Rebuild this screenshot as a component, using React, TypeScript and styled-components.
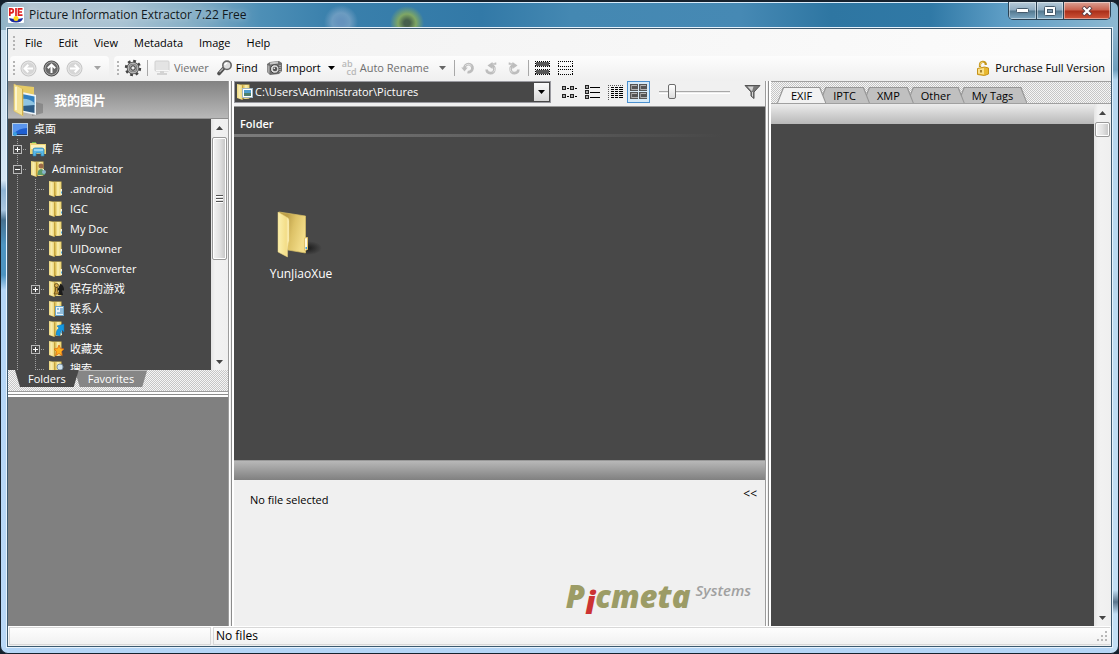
import React from "react";
import styled, { createGlobalStyle, css } from "styled-components";

const INK = "#484848";

const GlobalStyle = createGlobalStyle`
  * { box-sizing: border-box; }
  html, body { margin: 0; background: #14202c; }
  body, button, input {
    font-family: "Open Sans", "Noto Sans", "Noto Sans CJK SC", sans-serif;
    font-size: 11px;
    line-height: 16px;
    color: #000;
  }
  button { background: none; border: 0; padding: 0; margin: 0; }
  svg { display: block; flex: none; }
`;

/* ---------- window frame ---------- */

const Frame = styled.div`
  display: flex;
  flex-direction: column;
  height: 100vh;
  min-height: 480px;
  padding: 0 7px 7px;
  border: 1px solid #17222e;
  border-top-width: 2px;
  border-radius: 8px;
  overflow: hidden;
  background:
    linear-gradient(#d9ecfb, #d9ecfb) 0 0 / 100% 1px no-repeat,
    radial-gradient(circle at 406px 21px, #46604c 0 3px, #7fa765 9px, #7fa76500 17px) 0 0 / 100% 28px no-repeat,
    radial-gradient(circle at 340px 20px, #6593bd 0 3px, #86aacbaa 9px, #86aacb00 17px) 0 0 / 100% 28px no-repeat,
    radial-gradient(ellipse at 210px 26px, #c9a08c88 0, #c9a08c00 20px) 0 0 / 100% 28px no-repeat,
    linear-gradient(90deg, #8fb3c6 0, #b3c4d0 30px, #a9c3d3 120px, #86afc6 190px, #4d8fb6 260px, #3a80ac 330px, #3279a7 480px, #4488b2 570px, #4689b4 740px, #2e76a2 830px, #3079a6 930px, #5c9cc4 1000px, #8db9d2 100%) 0 0 / 100% 28px no-repeat,
    linear-gradient(#c6dcec 0, #d6e7f5 150px, #8fb4d4 160px, #a9c6e0 180px, #46708f 190px, #4d94c1 215px, #4d94c1 245px, #b5d6f6 260px, #b9d8f7 100%) 0 28px / 8px 100% no-repeat,
    linear-gradient(#8db5cf 0, #6f9fbe 40px, #b5d6ee 50px, #c3dff5 560px, #5a748c 572px, #c3dff5 584px, #c3dff5 100%) 100% 28px / 8px 100% no-repeat,
    #b4d5f6;
`;

const TitleBar = styled.header`
  display: flex;
  align-items: flex-start;
  height: 27px;
  flex: none;
`;

const Title = styled.h1`
  display: flex;
  align-items: center;
  gap: 5px;
  height: 26px;
  margin: 0;
  font-size: 12px;
  font-weight: 400;
  line-height: 16px;
  flex: 1;
  color: #101820;
  text-shadow: 0 0 6px #fff9;
`;

const Caption = styled.div`
  display: flex;
  height: 18px;
  border: 1px solid #2b4254;
  border-top: 0;
  border-radius: 0 0 5px 5px;
  overflow: hidden;
`;

const CaptionButton = styled.button<{ $close?: boolean }>`
  display: grid;
  place-items: center;
  width: ${(p) => (p.$close ? 47 : 27)}px;
  height: 17px;
  box-shadow: inset 0 0 0 1px #ffffff70;
  background: ${(p) =>
    p.$close
      ? "linear-gradient(#dba295, #c9604c 48%, #a92e18 52%, #d0553a)"
      : "linear-gradient(#b7cbd9, #8fabc0 48%, #54788f 52%, #7fa9c4)"};
  & + & { border-left: 1px solid #2b4254; }
`;

const Client = styled.main`
  display: flex;
  flex-direction: column;
  flex: 1;
  min-height: 0;
  background: #f0f0f0;
  box-shadow: 0 0 0 1px #3c5a70, 0 0 0 2px #e6f2fc;
`;

/* ---------- menu and toolbar ---------- */

const MenuBar = styled.nav`
  display: flex;
  align-items: center;
  height: 27px;
  flex: none;
  padding-left: 4px;
  background: linear-gradient(90deg, #f0f0f0, #fcfcfc);
`;

const MenuItem = styled.button`
  height: 20px;
  padding: 0 8px;
`;

const Grip = styled.span`
  width: 2px;
  height: 14px;
  margin: 0 2px 0 1px;
  flex: none;
  background: linear-gradient(#b4b4b4 2px, transparent 2px) 0 0 / 2px 4px;
`;

const ToolRow = styled.div`
  display: flex;
  height: 25px;
  flex: none;
  padding-left: 2px;
  background: linear-gradient(90deg, #f0f0f0, #fafafa);
`;

const ToolGroup = styled.div<{ $grow?: boolean }>`
  display: flex;
  align-items: center;
  padding: 0 0 1px 2px;
  margin-right: 5px;
  border-radius: 4px 4px 0 0;
  background: linear-gradient(#fdfdfd, #efefef);
  ${(p) => p.$grow && css`flex: 1; margin-right: 0;`}
`;

const ToolButton = styled.button<{ $w?: number }>`
  display: flex;
  align-items: center;
  justify-content: ${(p) => (p.$w ? "center" : "flex-start")};
  gap: 3px;
  height: 22px;
  ${(p) => (p.$w ? `width: ${p.$w}px;` : "padding: 0 4px;")}
  white-space: nowrap;
  &:disabled { color: #6f6f6f; }
`;

const Separator = styled.span`
  width: 1px;
  height: 16px;
  margin: 0 2px;
  background: #a8a8a8;
`;

const Purchase = styled.a`
  display: flex;
  align-items: center;
  gap: 6px;
  margin-left: auto;
  padding-right: 6px;
  color: #000;
  text-decoration: none;
`;

/* ---------- panes ---------- */

const Workspace = styled.div`
  display: flex;
  flex: 1;
  min-height: 0;
`;

const Pane = styled.section<{ $width?: number }>`
  display: flex;
  flex-direction: column;
  min-width: 0;
  ${(p) => (p.$width ? `flex: none; width: ${p.$width}px;` : "flex: 1;")}
`;

const VSplit = styled.div`
  width: 6px;
  flex: none;
  background: linear-gradient(90deg, #9c9c9c 1px, #fff 1px 2px, #f0f0f0 2px 3px, #8c8c8c 3px 4px, #fff 4px);
`;

const HSplit = styled.div`
  height: 6px;
  flex: none;
  background: linear-gradient(#9c9c9c 1px, #fff 1px 3px, #8c8c8c 3px 4px, #fff 4px);
`;

const Hatch = css`
  background: repeating-conic-gradient(#c6c6c6 0 25%, #f6f6f6 0 50%) 0 0 / 2px 2px;
`;

const PaneHeader = styled.h2`
  display: flex;
  align-items: center;
  gap: 9px;
  height: 38px;
  flex: none;
  margin: 0;
  padding-left: 5px;
  font-size: 13px;
  line-height: 18px;
  font-weight: 700;
  color: #fff;
  background: linear-gradient(#828282, #b8b8b8);
  border-bottom: 1px solid #8e8e8e;
`;

const ScrollArea = styled.div`
  display: flex;
  flex: 1;
  min-height: 0;
  background: ${INK};
`;

const Tree = styled.ul`
  flex: 1;
  margin: 0;
  padding: 0;
  list-style: none;
  overflow: hidden;
`;

const TreeRow = styled.li`
  display: flex;
  align-items: center;
  height: 20px;
  color: #fff;
  white-space: nowrap;
`;

const TreeLabel = styled.button`
  display: flex;
  align-items: center;
  gap: 4px;
  height: 20px;
  padding-left: 4px;
  color: #fff;
`;

const vertical = "linear-gradient(#a0a0a0 1px, transparent 1px) 9px 0 / 1px 2px repeat-y";
const horizontal = "linear-gradient(90deg, #a0a0a0 1px, transparent 1px) 9px 10px / 2px 1px repeat-x";

const Guide = styled.span<{ $branch?: boolean }>`
  display: grid;
  place-items: center;
  width: 18px;
  height: 20px;
  flex: none;
  background: ${vertical};
  ${(p) =>
    p.$branch &&
    css`
      background: linear-gradient(${INK}, ${INK}) 0 10px / 9px 1px no-repeat, ${vertical}, ${horizontal};
    `}
`;

const Expander = styled.button<{ $open?: boolean }>`
  width: 9px;
  height: 9px;
  border: 1px solid #b8b8b8;
  background: ${(p) => (p.$open ? "" : "linear-gradient(#fff, #fff) 3px 1px / 1px 5px no-repeat,")}
    linear-gradient(#fff, #fff) 1px 3px / 5px 1px no-repeat, ${INK};
`;

const ScrollBar = styled.div`
  display: flex;
  flex-direction: column;
  width: 17px;
  flex: none;
  background: linear-gradient(90deg, #e4e4e4, #f2f2f2 4px, #efefef);
`;

const ScrollArrow = styled.button`
  display: grid;
  place-items: center;
  width: 17px;
  height: 17px;
`;

const ScrollTrack = styled.div`
  flex: 1;
  min-height: 0;
  padding: 1px 1px 0;
`;

const Thumb = styled.div<{ $size: string }>`
  display: grid;
  place-items: center;
  height: ${(p) => p.$size};
  border: 1px solid #999;
  border-radius: 2px;
  box-shadow: inset 0 0 0 1px #fff;
  background: linear-gradient(90deg, #f4f4f4, #e2e2e2 50%, #c4c4c4);
`;

const TabsBelow = styled.div`
  display: flex;
  align-items: flex-start;
  height: 21px;
  flex: none;
  padding-left: 7px;
  ${Hatch}
`;

const FolderTab = styled.button<{ $active?: boolean }>`
  height: 17px;
  padding: 0 13px;
  margin-right: -4px;
  color: #fff;
  background: ${(p) => (p.$active ? INK : "linear-gradient(#b8b8b8 1px, #868686 1px)")};
  clip-path: polygon(0 0, 100% 0, calc(100% - 5px) 100%, 5px 100%);
  position: relative;
  z-index: ${(p) => (p.$active ? 1 : 0)};
`;

const TabsAbove = styled.div`
  display: flex;
  align-items: flex-end;
  height: 23px;
  flex: none;
  padding-left: 6px;
  border-top: 1px solid #a0a0a0;
  border-bottom: 1px solid #a0a0a0;
  ${Hatch}
`;

const slant = "polygon(0 100%, 6px 0, calc(100% - 6px) 0, 100% 100%)";

const MetaTab = styled.button<{ $order: number; $active?: boolean }>`
  position: relative;
  z-index: ${(p) => 9 - p.$order};
  height: 16px;
  padding: 1px 14px 0;
  margin-right: -7px;
  background: #969696;
  clip-path: ${slant};
  isolation: isolate;
  &::before {
    content: "";
    position: absolute;
    z-index: -1;
    inset: 1px 1px 0;
    background: ${(p) => (p.$active ? "#f2f2f2" : "#c0c0c0")};
    clip-path: ${slant};
  }
`;

const PreviewPane = styled.div`
  height: 229px;
  flex: none;
  background: #808080;
`;

/* ---------- centre pane ---------- */

const PathRow = styled.div`
  display: flex;
  align-items: center;
  height: 26px;
  flex: none;
  padding: 0 4px 4px 0;
  border-bottom: 1px solid #999;
`;

const ComboBox = styled.div`
  display: flex;
  align-items: center;
  width: 317px;
  height: 22px;
  margin-right: 7px;
  flex: none;
  border: 1px solid #9a9aa0;
  padding: 1px;
  background: ${INK};
`;

const PathInput = styled.input`
  flex: 1;
  min-width: 0;
  height: 18px;
  margin-left: 1px;
  padding: 0;
  border: 0;
  outline: 0;
  color: #fff;
  background: transparent;
`;

const DropButton = styled.button`
  display: grid;
  place-items: center;
  width: 15px;
  height: 18px;
  background: linear-gradient(#fafafa, #d8d8d8);
`;

const ViewButton = styled.button<{ $active?: boolean }>`
  display: grid;
  place-items: center;
  width: 23px;
  height: 22px;
  ${(p) => p.$active && css`border: 1px solid #4a90d0; background: #d6eaf8;`}
`;

const Slider = styled.input`
  appearance: none;
  width: 71px;
  height: 16px;
  margin: 0 0 0 9px;
  background: linear-gradient(#a8a8a8 1px, #ececec 1px 2px, #fff 2px) 0 7px / 100% 3px no-repeat;
  &::-webkit-slider-thumb {
    appearance: none;
    width: 8px;
    height: 15px;
    border: 1px solid #6c6c6c;
    border-radius: 2px;
    background: linear-gradient(#fff, #dcdcdc);
  }
`;

const FilterButton = styled.button`
  margin-left: auto;
`;

const FileArea = styled.div`
  flex: 1;
  min-height: 0;
  background: ${INK};
`;

const GroupHeading = styled.h3`
  height: 30px;
  margin: 0;
  padding: 9px 6px 0;
  font-size: 11px;
  line-height: 16px;
  font-weight: 600;
  color: #fff;
  background: linear-gradient(90deg, #7c7c7c, ${INK} 92%) 0 100% / 100% 3px no-repeat;
`;

const FileGrid = styled.div`
  display: flex;
  flex-wrap: wrap;
  padding: 73px 16px 0;
`;

const FileItem = styled.button`
  display: flex;
  flex-direction: column;
  align-items: center;
  gap: 6px;
  width: 102px;
  font-size: 12px;
  color: #fff;
`;

const Bar = styled.div<{ $dark?: boolean }>`
  height: 20px;
  flex: none;
  ${(p) =>
    p.$dark
      ? "background: linear-gradient(#b8b8b8, #808080); border-top: 1px solid #999;"
      : "background: linear-gradient(#ececec, #b8b8b8);"}
`;

const InfoPane = styled.div`
  display: flex;
  flex-direction: column;
  justify-content: space-between;
  height: 146px;
  flex: none;
  padding: 6px 8px 10px 16px;
  background: #f0f0f0;
`;

const InfoTop = styled.div`
  display: flex;
  justify-content: space-between;
  align-items: flex-start;
`;

const InfoText = styled.p`
  margin: 6px 0 0;
`;

const Collapse = styled.button`
  font-size: 12px;
`;

const Logo = styled.div`
  display: flex;
  align-items: flex-start;
  align-self: flex-end;
  gap: 5px;
  padding-right: 6px;
  font-style: italic;
`;

const LogoWord = styled.strong`
  font-size: 31px;
  line-height: 40px;
  font-weight: 800;
  color: #9c9c66;
`;

const LogoDrop = styled.span`
  display: inline-block;
  color: #cc3333;
  position: relative;
  top: 6px;
`;

const LogoSub = styled.em`
  font-size: 15px;
  line-height: 20px;
  font-weight: 600;
  padding-top: 4px;
  color: #a0a0a0;
`;

const StatusBar = styled.footer`
  display: flex;
  gap: 2px;
  height: 20px;
  flex: none;
  padding: 1px;
  font-size: 12px;
  background: linear-gradient(#fff, #f0f0f0);
`;

const StatusCell = styled.div<{ $width?: number }>`
  display: flex;
  align-items: center;
  justify-content: space-between;
  padding: 0 2px;
  border: 1px solid #d8d8d8;
  ${(p) => (p.$width ? `width: ${p.$width}px;` : "flex: 1; border-right: 0;")}
`;

/* ---------- icons ---------- */

const PieIcon = () => (
  <svg width="16" height="16" viewBox="0 0 16 16">
    <rect width="16" height="16" rx="1" fill="#fff" />
    <path d="M1 11q7 2 14 0q-1 4.500-7 4.500t-7-4.500" fill="#1a2b9c" />
    <circle cx="8" cy="11.500" r="2.500" fill="#ffd91a" />
    <path d="M1.800 9V1.800h1.500q2 0 2 2t-2 2H1.800M8 1v8M14.500 1.800h-4v6.400h4M10.500 5h3.500" fill="none" stroke="#e01f1f" strokeWidth="1.700" />
  </svg>
);

const Arrow = ({ dir, off }: { dir: "left" | "up" | "right"; off?: boolean }) => (
  <svg width="17" height="17" viewBox="0 0 17 17">
    <circle cx="8.500" cy="8.500" r="7.500" fill={off ? "#d6d6d6" : "#686868"} stroke={off ? "#c2c2c2" : "#444"} />
    <circle cx="8.500" cy="8.500" r="6.500" fill="none" stroke={off ? "#e6e6e6" : "#a4a4a4"} />
    <path
      d="M8.500 13V5M4.800 8.300L8.500 4.600l3.700 3.700"
      fill="none"
      stroke="#fff"
      strokeWidth="2"
      transform={`rotate(${dir === "left" ? -90 : dir === "right" ? 90 : 0} 8.500 8.500)`}
    />
  </svg>
);

const Caret = ({ color = "#000", up }: { color?: string; up?: boolean }) => (
  <svg width="7" height="4" viewBox="0 0 7 4">
    <path d={up ? "M0 4h7L3.500 0z" : "M0 0h7L3.500 4z"} fill={color} />
  </svg>
);

const GearIcon = () => (
  <svg width="18" height="18" viewBox="0 0 18 18">
    <circle cx="9" cy="9" r="7" fill="none" stroke="#444" strokeWidth="2.400" strokeDasharray="2.750 2.750" />
    <circle cx="9" cy="9" r="5" fill="#a8a8a8" stroke="#4c4c4c" strokeWidth="2.600" />
    <circle cx="9" cy="9" r="4.800" fill="none" stroke="#b4b4b4" strokeWidth="1.400" />
    <circle cx="9" cy="9" r="2.200" fill="#eee" stroke="#333" />
  </svg>
);

const ViewerIcon = () => (
  <svg width="17" height="16" viewBox="0 0 17 16">
    <rect x="1" y="1" width="14" height="10" rx="1" fill="#e4e4e4" stroke="#d0d0d0" />
    <path d="M6 11h4v2h3v2H3v-2h3z" fill="#d4d4d4" />
    <path d="M2 10.500h13" stroke="#f8f8f8" />
  </svg>
);

const FindIcon = () => (
  <svg width="16" height="16" viewBox="0 0 16 16">
    <path d="M6.500 8.500L2 13.500" stroke="#505050" strokeWidth="3.600" strokeLinecap="round" />
    <path d="M6 8.500L2.500 12.200" stroke="#b8b8b8" strokeWidth="1.200" />
    <circle cx="10" cy="5.300" r="4.200" fill="#dedede" stroke="#666" strokeWidth="1.600" />
    <path d="M7.700 5q.6-2 2.500-2" fill="none" stroke="#fff" strokeWidth="1.400" />
  </svg>
);

const CameraIcon = () => (
  <svg width="17" height="16" viewBox="0 0 17 16">
    <path d="M1 4l3-2 9-1 3 2v8l-3 3-9 1-3-3z" fill="#707070" />
    <path d="M4 2.500l8-1v2l-8 1z" fill="#c9c9c9" />
    <path d="M1.500 5v7l2 1.500V6z" fill="#aaa" />
    <circle cx="8.800" cy="9" r="4.300" fill="#ddd" stroke="#444" />
    <circle cx="9" cy="9" r="2.300" fill="#555" />
    <circle cx="8.300" cy="8.300" r=".8" fill="#fff" />
    <path d="M14 5v7" stroke="#e0e0e0" strokeDasharray="1 1" />
  </svg>
);

const AbcdMark = styled.span`
  display: flex;
  flex-direction: column;
  width: 15px;
  font-size: 9px;
  line-height: 8px;
  font-weight: 600;
  color: #b8b8b8;
  span { align-self: flex-start; }
  span + span { align-self: flex-end; }
`;

const RotateIcon = ({ kind }: { kind: "both" | "left" | "right" }) => (
  <svg width="14" height="14" viewBox="0 0 14 14">
    <g transform={kind === "right" ? "translate(14 0) scale(-1 1)" : undefined}>
      {kind === "both" ? (
        <>
          <path d="M3.500 7.500A4 4 0 1 1 6.500 11" fill="none" stroke="#bdbdbd" strokeWidth="2.800" />
          <path d="M4 5A4 4 0 0 1 10.500 5" fill="none" stroke="#e0e0e0" strokeWidth="1" />
          <path d="M.3 6.500h6.400l-3.200 4z" fill="#bdbdbd" />
        </>
      ) : (
        <>
          <path d="M7 4.500h.5a3.900 3.900 0 1 1-4.900 4" fill="none" stroke="#bdbdbd" strokeWidth="2.600" />
          <path d="M8.500 1v7L3.500 4.500z" fill="#bdbdbd" />
          <path d="M7 3h4.500V1.500" fill="none" stroke="#bdbdbd" strokeWidth="1.600" />
          <path d="M10.500 6.500q1.500 2.500-1.500 5" fill="none" stroke="#dedede" strokeWidth="1" />
        </>
      )}
    </g>
  </svg>
);

const SelectIcon = ({ filled }: { filled?: boolean }) => (
  <svg width="15" height="14" viewBox="0 0 15 14" shapeRendering="crispEdges">
    {[0, 8].map((y) => (
      <g key={y} transform={`translate(0 ${y})`}>
        {filled && <rect x="1" y="1" width="13" height="4" fill="#585858" />}
        <path d="M0 .5h15M0 5.500h15M.5 0v6M14.500 0v6" stroke="#000" strokeDasharray="1 1" />
      </g>
    ))}
  </svg>
);

const LockIcon = () => (
  <svg width="12" height="16" viewBox="0 0 12 16">
    <path d="M3 7V4.500A3 3 0 0 1 8.700 3.500V5" fill="none" stroke="#c4961c" strokeWidth="2.200" />
    <path d="M3.300 6V4.500a2.500 2.500 0 0 1 3-2.300" fill="none" stroke="#f4d878" />
    <path d="M.5 8.500l7-1.500 4 1v6l-4 1.500-7-1z" fill="#e8b830" stroke="#c4921a" />
    <path d="M1 9l6-1v6.500l-6-1z" fill="#fae08a" />
    <path d="M4 10v2.500" stroke="#8a6410" strokeWidth="1.500" />
  </svg>
);

const ListIcon = ({ kind }: { kind: "small" | "list" | "detail" | "thumbs" }) => (
  <svg width="17" height="16" viewBox="0 0 17 16" shapeRendering="crispEdges">
    {kind === "small" &&
      [2, 10].map((y) =>
        [1, 9].map((x) => (
          <g key={`${x}-${y}`}>
            <rect x={x + 0.5} y={y + 0.5} width="3" height="3" fill="#aaa" stroke="#222" />
            <path d={`M${x + 5} ${y + 2.5}h2`} stroke="#000" />
          </g>
        ))
      )}
    {kind === "list" &&
      [1, 6, 11].map((y) => (
        <g key={y}>
          <rect x="1.500" y={y + 0.5} width="3" height="3" fill="#aaa" stroke="#222" />
          <path d={`M6 ${y + 2.5}h10`} stroke="#000" />
        </g>
      ))}
    {kind === "detail" && (
      <>
        <path d="M1 1.500h15M1.500 3v13" stroke="#555" strokeDasharray="1 1" />
        {[4, 6, 8, 10, 12, 14].map((y) => (
          <path key={y} d={`M4 ${y - 0.5}h3M8 ${y - 0.5}h3M12 ${y - 0.5}h4`} stroke="#000" />
        ))}
      </>
    )}
    {kind === "thumbs" &&
      [0, 8].map((y) =>
        [0, 9].map((x) => (
          <g key={`${x}-${y}`}>
            <rect x={x + 0.5} y={y + 0.5} width="7" height="6" fill="#555" stroke="#555" />
            <path d={`M${x + 2} ${y + 1.5}h5M${x + 1} ${y + 5.5}h7`} stroke="#b4b4b4" />
            <path d={`M${x + 1.5} ${y + 1}v5`} stroke="#999" />
          </g>
        ))
      )}
  </svg>
);

const FunnelIcon = () => (
  <svg width="17" height="16" viewBox="0 0 17 16">
    <path d="M1 1.500h15l-6 6.500v6.500L7 12V8z" fill="#777" stroke="#555" />
    <path d="M3.500 2.500h6L8 7.500z" fill="#d4d4d4" />
    <path d="M8.500 8v4.500" stroke="#d8d8d8" />
  </svg>
);

type Badge = "none" | "user" | "game" | "contact" | "link" | "star" | "search" | "picture";

const FolderIcon = ({ badge = "none" }: { badge?: Badge }) => (
  <svg width="18" height="18" viewBox="0 0 18 18">
    <path d="M1 1.500h12.500v14H6z" fill="#dcbf58" />
    <path d="M7 2h6v13.500l-5 .5z" fill="#ecd67a" />
    <path d="M9 2h2.500v13.500H9z" fill="#f6e9a6" />
    <path d="M1 1l5.500 1.500V17L1 15z" fill="#f0dc88" />
    <path d="M2.500 2l2 .6v13l-2-.8z" fill="#f8ebae" />
    <path d="M6 2.500V17l1.300-1V2z" fill="#c4a23c" />
    <path d="M12.500 9h1.500v6h-1.500z" fill="#f7f2dc" />
    <path d="M13 11.500h1v2h-1z" fill="#4fa9d8" />
    {badge === "user" && (
      <>
        <circle cx="11" cy="6" r="2.500" fill="#9b6a48" />
        <path d="M7.500 15q0-6 3.500-6t4 6z" fill="#5b9a6c" />
        <circle cx="14" cy="12" r="2" fill="#87b4c8" />
      </>
    )}
    {badge === "game" && (
      <>
        <path d="M12.500 3.500q4 3 3.500 7h-2l1 4.500h-5l1-4.500H9z" fill="#1b1b1b" />
        <circle cx="8.500" cy="5.500" r="2" fill="#d8ac4a" stroke="#5c4416" strokeWidth=".8" />
        <path d="M7.500 7.500h2v3.500l1.500 3H6l1.500-3z" fill="#c79a3c" stroke="#5c4416" strokeWidth=".8" />
      </>
    )}
    {badge === "contact" && (
      <>
        <rect x="7.500" y="6.500" width="8" height="9" fill="#e9f4fb" stroke="#6aa4c8" />
        <path d="M9 9h2M12 9h3M12 11h3M9 13h6" stroke="#3a86bd" />
      </>
    )}
    {badge === "link" && <path d="M8 15q0-5 3-7L9 6l7-2v8l-2-2q-2 2-2 6z" fill="#1597e0" stroke="#0b6cb0" strokeWidth=".5" />}
    {badge === "star" && (
      <path d="M11 5l1.500 3.500 3.500.5-2.500 2.500.7 4-3.200-2-3.200 2 .7-4L6 9l3.500-.5z" fill="#ffb21e" stroke="#dd6a10" strokeWidth=".8" />
    )}
    {badge === "search" && <circle cx="12" cy="7" r="3" fill="#cfe2ee" stroke="#7d94a4" />}
    {badge === "picture" && (
      <>
        <rect x="6.500" y="5.500" width="10" height="9" fill="#fff" stroke="#9fb6c4" />
        <path d="M8 7h7v3H8z" fill="#4e9ccb" />
        <path d="M8 10h7v3H8z" fill="#4d7f6c" />
      </>
    )}
  </svg>
);

const DesktopIcon = () => (
  <svg width="18" height="18" viewBox="0 0 18 18">
    <rect x=".5" y="3.500" width="15" height="12" fill="#1f5fd0" stroke="#b4cbe0" />
    <path d="M1 4h14v4Q7 8 1 14z" fill="#5b96ee" />
    <path d="M1 14.500h14" stroke="#243f6b" />
    <circle cx="3" cy="14" r="2" fill="#3ba0e0" />
  </svg>
);

const LibraryIcon = () => (
  <svg width="18" height="18" viewBox="0 0 18 18">
    <path d="M0 3h6l1 1h9v10H0z" fill="#ecd476" />
    <path d="M1 5h14v4H1z" fill="#fbf1bd" />
    <path d="M2 2h4v1H2z" fill="#63b04a" />
    <path d="M3 16v-6q0-2 2-2h7q2 0 2 2v6h-3v-3H6v3z" fill="#58b8e6" stroke="#2b7fb0" strokeWidth=".7" />
    <path d="M4 10h9" stroke="#d4f0fb" />
  </svg>
);

const PicturesIcon = () => (
  <svg width="32" height="34" viewBox="0 0 32 34">
    <path d="M19 18l11 3v9l-11 3z" fill="#6c6c6c" opacity=".5" />
    <path d="M3 2l18 2v25H6z" fill="#e6cb66" />
    <path d="M9 9l14 3v20l-14-3z" fill="#eef4f8" />
    <path d="M9 11l12.500 2.500v8L9 19z" fill="#2f7fc0" />
    <path d="M9 16q6-1 12.500 4v4L9 24z" fill="#8fc4e2" />
    <path d="M9 23l12.500-1v8L9 27.500z" fill="#2d5c86" />
    <path d="M1 1l9 5v27l-9-5z" fill="#f4e294" stroke="#dcbf5c" strokeWidth=".7" />
    <path d="M3 4v23" stroke="#fcf5cc" strokeWidth="2" />
    <path d="M9.500 6v26" stroke="#cfae4c" />
  </svg>
);

const BigFolder = () => (
  <svg width="50" height="50" viewBox="0 0 50 50">
    <defs>
      <linearGradient id="flap" x1="0" x2="1">
        <stop offset="0" stopColor="#fbf0ae" />
        <stop offset=".75" stopColor="#f3dd88" />
        <stop offset="1" stopColor="#fff6c8" />
      </linearGradient>
      <linearGradient id="back" x1="0" x2="1" y1="0" y2=".4">
        <stop offset=".3" stopColor="#bd9f48" />
        <stop offset=".6" stopColor="#ddc267" />
        <stop offset="1" stopColor="#f2dc88" />
      </linearGradient>
      <radialGradient id="shade">
        <stop offset="0" stopColor="#1c1c1c" />
        <stop offset="1" stopColor="#1c1c1c" stopOpacity="0" />
      </radialGradient>
    </defs>
    <ellipse cx="32" cy="38" rx="14" ry="7" fill="url(#shade)" />
    <path d="M3 2l26.500 4v37L12 40z" fill="url(#back)" stroke="#d9bf66" strokeWidth=".7" />
    <path d="M2 2l10 6q1 1 1 3v20q-1.500 3-1.500 16L2 42z" fill="url(#flap)" stroke="#ead27c" strokeWidth=".5" />
    <path d="M28.500 28l3-.5v12l-3 1z" fill="#fff8dc" stroke="#e0c46a" strokeWidth="1" />
    <path d="M29.500 37h1.500v2h-1.500z" fill="#3fa4dc" />
  </svg>
);

const ThumbGrip = () => (
  <svg width="7" height="8" viewBox="0 0 7 8" shapeRendering="crispEdges">
    <path d="M0 .5h7M0 3.500h7M0 6.500h7" stroke="#555" />
    <path d="M0 1.500h7M0 4.500h7M0 7.500h7" stroke="#fff" />
  </svg>
);

const ResizeGrip = () => (
  <svg width="12" height="12" viewBox="0 0 12 12" shapeRendering="crispEdges">
    <path d="M9 1h2v2H9zM5 5h2v2H5zM9 5h2v2H9zM1 9h2v2H1zM5 9h2v2H5zM9 9h2v2H9z" fill="#b8b8b8" />
  </svg>
);

/* ---------- data ---------- */

interface Node {
  label: string;
  level: number;
  icon: React.ReactNode;
  toggle?: "open" | "closed";
}

const nodes: Node[] = [
  { label: "桌面", level: 0, icon: <DesktopIcon /> },
  { label: "库", level: 1, icon: <LibraryIcon />, toggle: "closed" },
  { label: "Administrator", level: 1, icon: <FolderIcon badge="user" />, toggle: "open" },
  { label: ".android", level: 2, icon: <FolderIcon /> },
  { label: "IGC", level: 2, icon: <FolderIcon /> },
  { label: "My Doc", level: 2, icon: <FolderIcon /> },
  { label: "UIDowner", level: 2, icon: <FolderIcon /> },
  { label: "WsConverter", level: 2, icon: <FolderIcon /> },
  { label: "保存的游戏", level: 2, icon: <FolderIcon badge="game" />, toggle: "closed" },
  { label: "联系人", level: 2, icon: <FolderIcon badge="contact" /> },
  { label: "链接", level: 2, icon: <FolderIcon badge="link" /> },
  { label: "收藏夹", level: 2, icon: <FolderIcon badge="star" />, toggle: "closed" },
  { label: "搜索", level: 2, icon: <FolderIcon badge="search" /> },
];

const menus = ["File", "Edit", "View", "Metadata", "Image", "Help"];
const metaTabs = ["EXIF", "IPTC", "XMP", "Other", "My Tags"];

const VerticalScroll = ({ size, grip }: { size: string; grip?: boolean }) => (
  <ScrollBar>
    <ScrollArrow aria-label="Scroll up"><Caret up color="#444" /></ScrollArrow>
    <ScrollTrack>
      <Thumb $size={size}>{grip && <ThumbGrip />}</Thumb>
    </ScrollTrack>
    <ScrollArrow aria-label="Scroll down"><Caret color="#444" /></ScrollArrow>
  </ScrollBar>
);

export default function App() {
  return (
    <>
      <GlobalStyle />
      <Frame>
        <TitleBar>
          <Title><PieIcon />Picture Information Extractor 7.22 Free</Title>
          <Caption>
            <CaptionButton aria-label="Minimize">
              <svg width="13" height="5" viewBox="0 0 13 5"><rect x=".5" y=".5" width="12" height="4" rx="1" fill="#fff" stroke="#455a6c" /></svg>
            </CaptionButton>
            <CaptionButton aria-label="Maximize">
              <svg width="12" height="10" viewBox="0 0 12 10">
                <rect x=".5" y=".5" width="11" height="9" rx="1" fill="#fff" stroke="#455a6c" />
                <rect x="3.500" y="3.500" width="5" height="3" fill="#7d98ac" stroke="#455a6c" />
              </svg>
            </CaptionButton>
            <CaptionButton $close aria-label="Close">
              <svg width="12" height="10" viewBox="0 0 12 10">
                <path d="M2 1l8 8M10 1l-8 8" stroke="#5a4048" strokeWidth="4" />
                <path d="M2.500 1.500l7 7M9.500 1.500l-7 7" stroke="#fff" strokeWidth="2.200" />
              </svg>
            </CaptionButton>
          </Caption>
        </TitleBar>

        <Client>
          <MenuBar aria-label="Main menu">
            <Grip />
            {menus.map((m) => <MenuItem key={m}>{m}</MenuItem>)}
          </MenuBar>

          <ToolRow>
            <ToolGroup>
              <Grip />
              <ToolButton $w={23} disabled aria-label="Back"><Arrow dir="left" off /></ToolButton>
              <ToolButton $w={23} aria-label="Up"><Arrow dir="up" /></ToolButton>
              <ToolButton $w={23} disabled aria-label="Forward"><Arrow dir="right" off /></ToolButton>
              <ToolButton $w={23} disabled aria-label="History"><Caret color="#a4a4a4" /></ToolButton>
            </ToolGroup>
            <ToolGroup $grow>
              <Grip />
              <ToolButton $w={24} aria-label="Settings"><GearIcon /></ToolButton>
              <Separator />
              <ToolButton disabled><ViewerIcon />Viewer</ToolButton>
              <ToolButton><FindIcon />Find</ToolButton>
              <ToolButton><CameraIcon />Import</ToolButton>
              <ToolButton $w={13} aria-label="Import options"><Caret /></ToolButton>
              <ToolButton disabled><AbcdMark><span>ab</span><span>cd</span></AbcdMark>Auto Rename</ToolButton>
              <ToolButton $w={19} disabled aria-label="Rename options"><Caret color="#666" /></ToolButton>
              <Separator />
              <ToolButton $w={23} disabled aria-label="Auto rotate"><RotateIcon kind="both" /></ToolButton>
              <ToolButton $w={23} disabled aria-label="Rotate left"><RotateIcon kind="left" /></ToolButton>
              <ToolButton $w={23} disabled aria-label="Rotate right"><RotateIcon kind="right" /></ToolButton>
              <Separator />
              <ToolButton $w={23} aria-label="Select all"><SelectIcon filled /></ToolButton>
              <ToolButton $w={23} aria-label="Select none"><SelectIcon /></ToolButton>
              <Purchase href="#purchase"><LockIcon />Purchase Full Version</Purchase>
            </ToolGroup>
          </ToolRow>

          <Workspace>
            <Pane $width={220}>
              <PaneHeader><PicturesIcon />我的图片</PaneHeader>
              <ScrollArea>
                <Tree>
                  {nodes.map((n) => (
                    <TreeRow key={n.label}>
                      {Array.from({ length: n.level }, (_, i) => {
                        const last = i === n.level - 1;
                        return (
                          <Guide key={i} $branch={last}>
                            {last && n.toggle && (
                              <Expander $open={n.toggle === "open"} aria-label={`Toggle ${n.label}`} />
                            )}
                          </Guide>
                        );
                      })}
                      <TreeLabel>{n.icon}{n.label}</TreeLabel>
                    </TreeRow>
                  ))}
                </Tree>
                <VerticalScroll size="123px" grip />
              </ScrollArea>
              <TabsBelow>
                <FolderTab $active>Folders</FolderTab>
                <FolderTab>Favorites</FolderTab>
              </TabsBelow>
              <HSplit />
              <PreviewPane />
            </Pane>
            <VSplit />

            <Pane>
              <PathRow>
                <ComboBox>
                  <FolderIcon badge="picture" />
                  <PathInput aria-label="Path" defaultValue="C:\Users\Administrator\Pictures" />
                  <DropButton aria-label="Show paths"><Caret /></DropButton>
                </ComboBox>
                <ViewButton aria-label="Small icons"><ListIcon kind="small" /></ViewButton>
                <ViewButton aria-label="List"><ListIcon kind="list" /></ViewButton>
                <ViewButton aria-label="Details"><ListIcon kind="detail" /></ViewButton>
                <ViewButton $active aria-label="Thumbnails"><ListIcon kind="thumbs" /></ViewButton>
                <Slider type="range" min={0} max={100} defaultValue={14} aria-label="Thumbnail size" />
                <FilterButton aria-label="Filter"><FunnelIcon /></FilterButton>
              </PathRow>
              <FileArea>
                <GroupHeading>Folder</GroupHeading>
                <FileGrid>
                  <FileItem><BigFolder />YunJiaoXue</FileItem>
                </FileGrid>
              </FileArea>
              <Bar $dark />
              <InfoPane>
                <InfoTop>
                  <InfoText>No file selected</InfoText>
                  <Collapse aria-label="Collapse">&lt;&lt;</Collapse>
                </InfoTop>
                <Logo>
                  <LogoWord>P<LogoDrop>i</LogoDrop>cmeta</LogoWord>
                  <LogoSub>Systems</LogoSub>
                </Logo>
              </InfoPane>
            </Pane>
            <VSplit />

            <Pane $width={340}>
              <TabsAbove>
                {metaTabs.map((t, i) => <MetaTab key={t} $order={i} $active={i === 0}>{t}</MetaTab>)}
              </TabsAbove>
              <ScrollArea>
                <Pane><Bar /></Pane>
                <VerticalScroll size="15px" />
              </ScrollArea>
            </Pane>
          </Workspace>

          <StatusBar>
            <StatusCell $width={202} />
            <StatusCell>No files<ResizeGrip /></StatusCell>
          </StatusBar>
        </Client>
      </Frame>
    </>
  );
}
